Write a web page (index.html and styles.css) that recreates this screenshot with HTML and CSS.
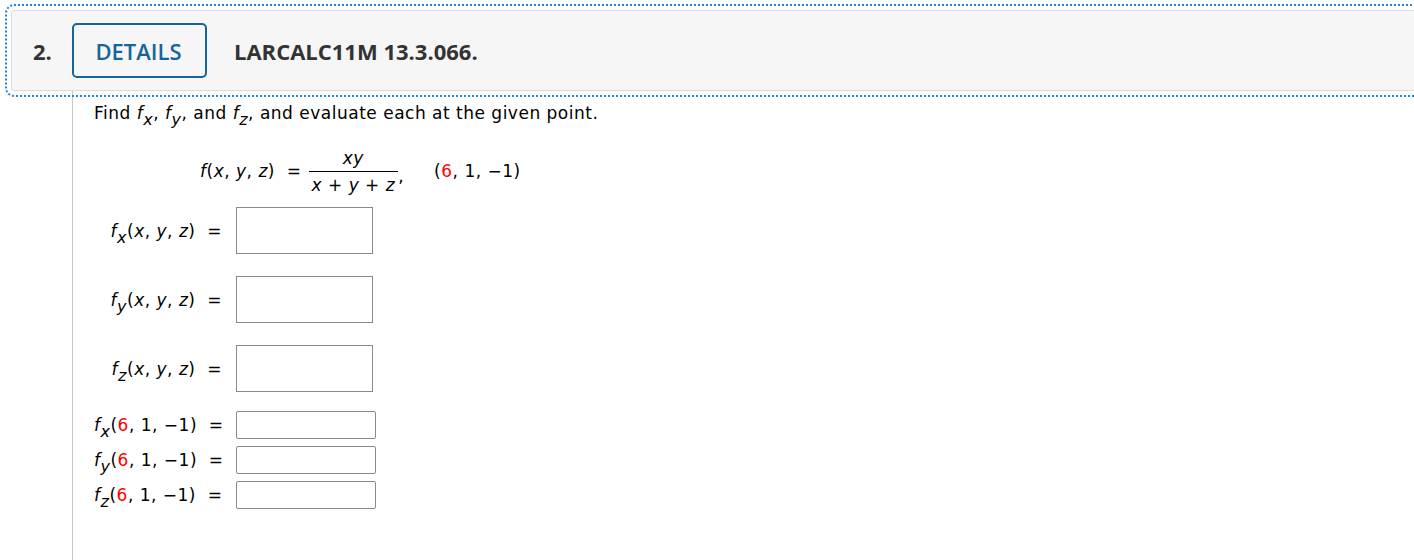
FILE: index.html
```html
<!DOCTYPE html>
<html>
<head>
<meta charset="utf-8">
<link rel="stylesheet" href="styles.css">
</head>
<body>
<div class="question">
  <div class="qhead">
    <span class="qnum">2.</span>
    <span class="details">DETAILS</span>
    <span class="qtitle">LARCALC11M 13.3.066.</span>
  </div>
  <div class="qbody">
    <p class="prompt">Find <i>f</i><sub>x</sub>, <i>f</i><sub>y</sub>, and <i>f</i><sub>z</sub>, and evaluate each at the given point.</p>
    <div class="formula">
      <span><i>f</i>(<i>x</i>, <i>y</i>, <i>z</i>) &nbsp;=</span>
      <span class="frac"><span class="num"><i>xy</i></span><span class="den"><i>x</i> + <i>y</i> + <i>z</i></span></span><span class="comma">,</span>
      <span class="point">(<span class="red">6</span>, 1, −1)</span>
    </div>
    <div class="answers big">
      <span class="lbl"><i>f</i><sub>x</sub>(<i>x</i>, <i>y</i>, <i>z</i>) &nbsp;=</span><span class="box"></span>
      <span class="lbl"><i>f</i><sub>y</sub>(<i>x</i>, <i>y</i>, <i>z</i>) &nbsp;=</span><span class="box"></span>
      <span class="lbl"><i>f</i><sub>z</sub>(<i>x</i>, <i>y</i>, <i>z</i>) &nbsp;=</span><span class="box"></span>
    </div>
    <div class="answers small">
      <span class="lbl"><i>f</i><sub>x</sub>(<span class="red">6</span>, 1, −1) &nbsp;=</span><span class="box"></span>
      <span class="lbl"><i>f</i><sub>y</sub>(<span class="red">6</span>, 1, −1) &nbsp;=</span><span class="box"></span>
      <span class="lbl"><i>f</i><sub>z</sub>(<span class="red">6</span>, 1, −1) &nbsp;=</span><span class="box"></span>
    </div>
  </div>
</div>
</body>
</html>
```
FILE: styles.css
```css
html, body {
  margin: 0;
  padding: 0;
  background: #fff;
  overflow: hidden;
}
body {
  width: 1414px;
  height: 560px;
}
.question {
  margin: 10px 0 0 11px;
  width: 1460px;
  font-family: "DejaVu Sans", Verdana, sans-serif;
  color: #000;
}
.qhead {
  height: 79px;
  background: #f6f6f6;
  border: 1px solid #dcdcdc;
  border-radius: 3px;
  display: flex;
  align-items: center;
  outline: 2px dotted #1e86e0;
  outline-offset: 4px;
  font-family: "Open Sans", sans-serif;
  font-weight: 700;
  font-size: 22px;
  color: #333;
}
.qnum {
  margin-left: 21px;
  width: 39px;
}
.details {
  box-sizing: border-box;
  width: 135px;
  height: 55px;
  border: 2px solid #15659d;
  border-radius: 5px;
  color: #15659d;
  font-weight: 600;
  display: flex;
  align-items: center;
  justify-content: center;
  padding-right: 2px;
}
.qtitle {
  margin-left: 27px;
}
.qbody {
  margin-left: 61px;
  border-left: 1px solid #c8c8c8;
  height: 480px;
  padding: 6px 0 0 21px;
  font-size: 17px;
  letter-spacing: 0.5px;
}
.prompt {
  margin: 0;
  line-height: 32px;
}
i {
  font-style: italic;
}
sub {
  font-size: 16px;
  vertical-align: -6px;
  font-style: italic;
  line-height: 0;
}
.red {
  color: #f00;
}
.formula {
  margin: 17px 0 0 106px;
  display: flex;
  align-items: center;
  height: 50px;
}
.frac {
  display: inline-flex;
  flex-direction: column;
  align-items: center;
  margin-left: 7px;
}
.num {
  padding: 0 4px 2px;
  line-height: 22px;
}
.den {
  border-top: 1px solid #000;
  padding: 2px 3px 0;
  line-height: 22px;
}
.comma {
  align-self: center;
  margin-top: 10px;
}
.point {
  margin-left: 30px;
}
.answers {
  display: grid;
  grid-template-columns: 128px auto;
  column-gap: 14px;
  align-items: center;
  justify-content: start;
}
.lbl {
  text-align: right;
  white-space: nowrap;
}
.big {
  margin-top: 11px;
  row-gap: 22px;
}
.big .box {
  width: 137px;
  height: 47px;
}
.small {
  margin-top: 19px;
  row-gap: 7px;
}
.small .box {
  width: 140px;
  height: 28px;
  border-radius: 2px;
}
.box {
  box-sizing: border-box;
  border: 1px solid #8a8a8a;
  background: #fff;
  display: block;
}
```
